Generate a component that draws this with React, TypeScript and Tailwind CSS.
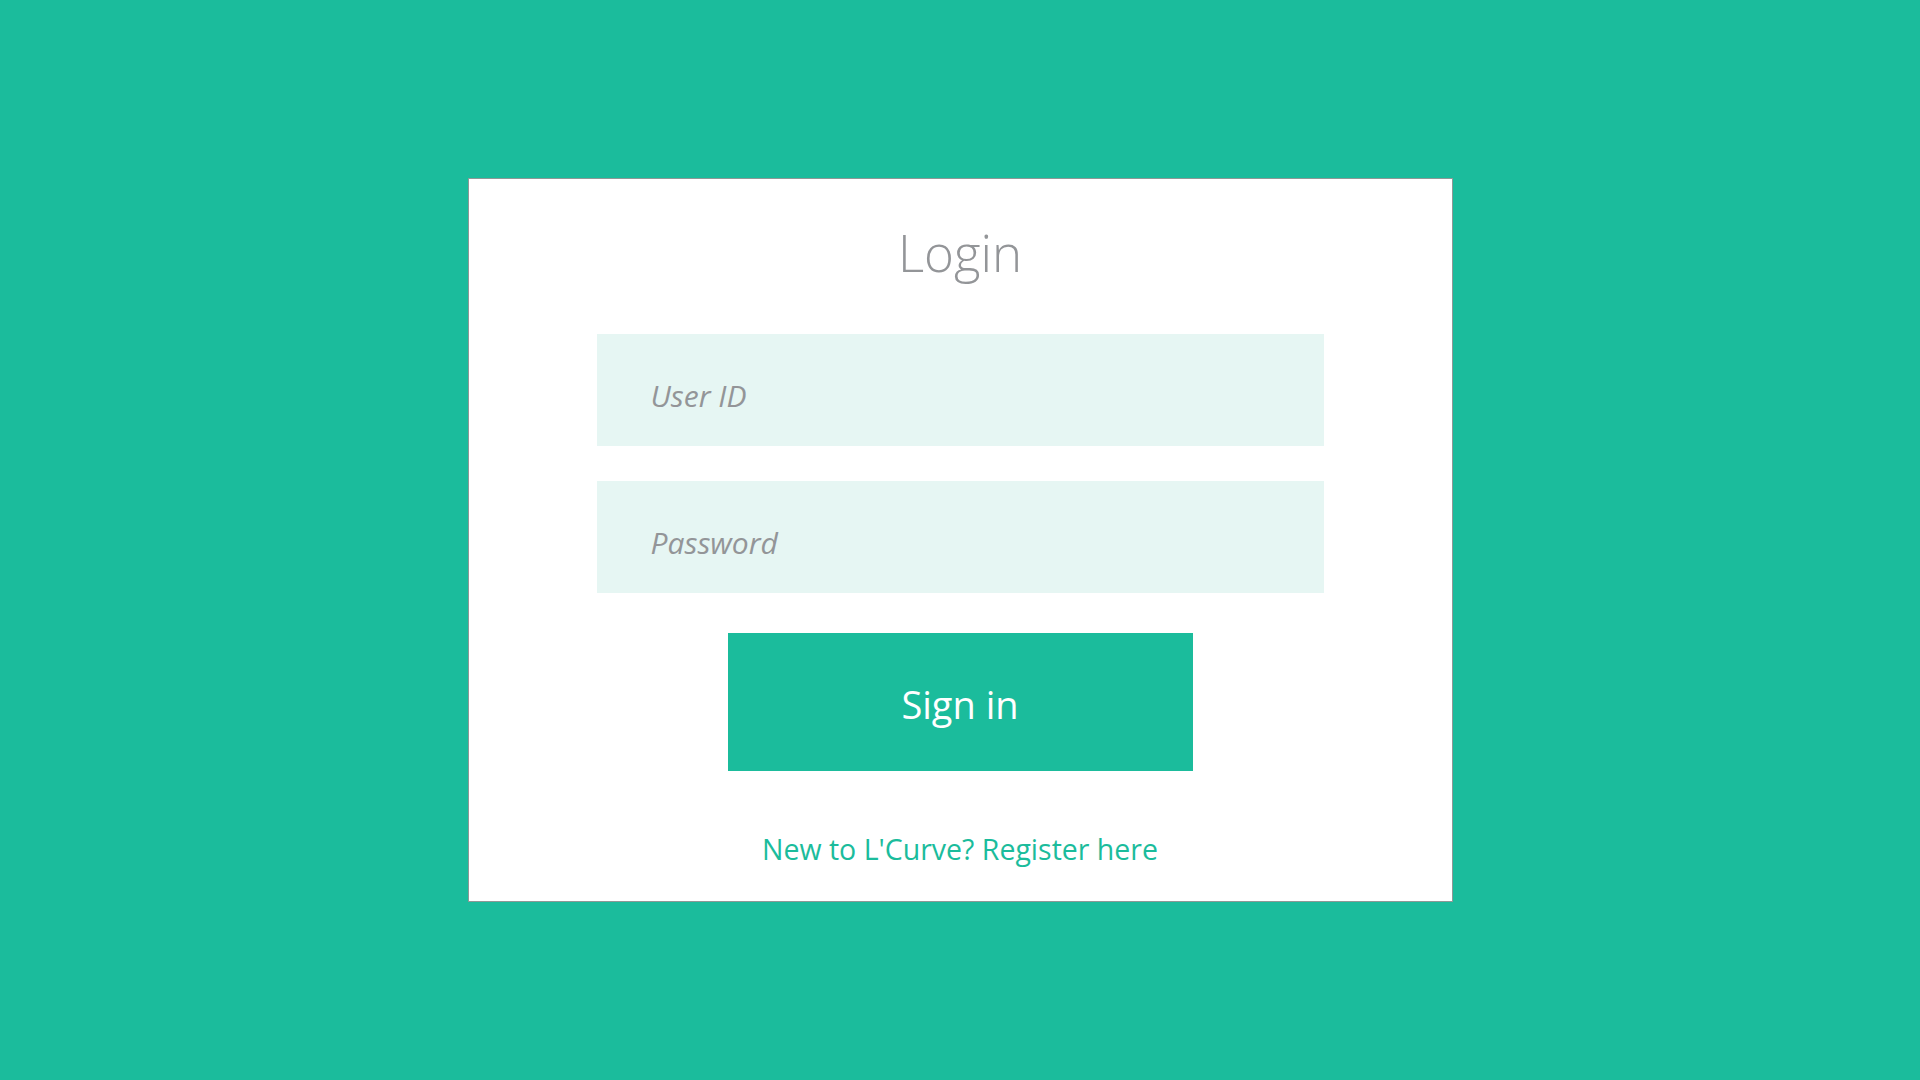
import React from 'react';

const App: React.FC = () => {
    return (
        <div className="w-full h-screen bg-[#1bbc9c] flex items-center justify-center font-['Open_Sans','Noto_Sans',sans-serif]">
            <div className="w-[985px] h-[724px] bg-white border border-[#8e9896] flex flex-col items-center pt-[48px]">
                <h1 className="text-[51px] leading-[51px] font-light text-[#939598]">Login</h1>

                <form className="flex flex-col items-center" onSubmit={e => e.preventDefault()}>
                    <input
                        type="text"
                        placeholder="User ID"
                        className="mt-[56px] w-[727px] h-[112px] bg-[#e6f6f3] pl-[54px] pt-[11px] text-[30px] italic text-[#939598] placeholder:text-[#939598] outline-none"
                    />
                    <input
                        type="password"
                        placeholder="Password"
                        className="mt-[35px] w-[727px] h-[112px] bg-[#e6f6f3] pl-[54px] pt-[11px] text-[30px] italic text-[#939598] placeholder:text-[#939598] outline-none"
                    />
                    <button
                        type="submit"
                        className="mt-[40px] w-[465px] h-[138px] bg-[#1bbc9c] text-white text-[38px] pt-[4px] cursor-pointer"
                    >
                        Sign in
                    </button>
                </form>

                <a href="#" className="mt-[64px] text-[28.5px] leading-[28px] text-[#1bbc9c]">
                    New to L'Curve? Register here
                </a>
            </div>
        </div>
    );
};

export default App;
